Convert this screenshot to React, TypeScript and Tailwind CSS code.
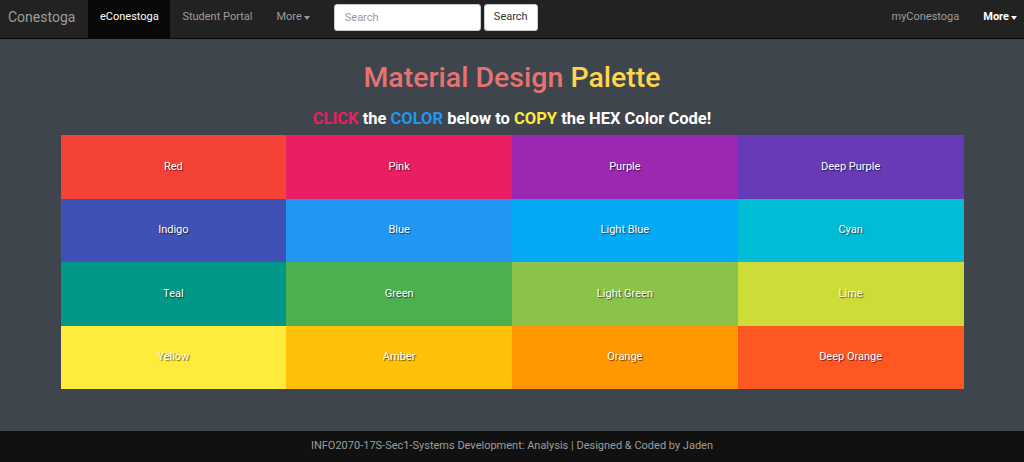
import React from 'react';

const colors: [string, string][] = [
  ['Red', '#f44336'],
  ['Pink', '#e91e63'],
  ['Purple', '#9c27b0'],
  ['Deep Purple', '#673ab7'],
  ['Indigo', '#3f51b5'],
  ['Blue', '#2196f3'],
  ['Light Blue', '#03a9f4'],
  ['Cyan', '#00bcd4'],
  ['Teal', '#009688'],
  ['Green', '#4caf50'],
  ['Light Green', '#8bc34a'],
  ['Lime', '#cddc39'],
  ['Yellow', '#ffeb3b'],
  ['Amber', '#ffc107'],
  ['Orange', '#ff9800'],
  ['Deep Orange', '#ff5722'],
];

const Caret = () => (
  <span className="ml-[2px] inline-block h-0 w-0 border-x-[3.5px] border-t-[4px] border-x-transparent border-t-current align-middle" />
);

const App = () => {
  return (
    <div className="flex min-h-[462px] flex-col bg-[#3e454c] font-['Roboto',sans-serif]">
      <nav className="flex h-[39px] items-stretch border-b border-[#080808] bg-[#222222] text-[11px]">
        <a className="flex items-center pb-[3px] pl-[8px] pr-[13px] text-[14px] text-[#9d9d9d]">Conestoga</a>
        <a className="flex w-[82px] items-center justify-center bg-[#080808] pb-[3px] text-white">eConestoga</a>
        <a className="flex items-center px-[12px] pb-[3px] text-[#9d9d9d]">Student Portal</a>
        <a className="flex items-center px-[12px] pb-[3px] text-[#9d9d9d]">
          More
          <Caret />
        </a>
        <div className="ml-[12px] flex items-center gap-[3px] pb-[4px]">
          <input
            className="h-[27px] w-[147px] rounded-[3px] border border-[#ccc] bg-white px-[10px] text-[11px] outline-none placeholder:text-[#999]"
            placeholder="Search"
          />
          <button className="h-[27px] w-[54px] rounded-[3px] border border-[#ccc] bg-white text-[11px] text-[#333]">
            Search
          </button>
        </div>
        <div className="ml-auto flex items-stretch">
          <a className="flex items-center px-[12px] pb-[3px] text-[#9d9d9d]">myConestoga</a>
          <a className="flex items-center pb-[3px] pl-[12px] pr-[7px] font-bold text-white">
            More
            <Caret />
          </a>
        </div>
      </nav>

      <main className="flex flex-1 flex-col items-center">
        <h1 className="mt-[19px] text-[28.5px] font-medium leading-[40px]">
          <span className="text-[#e57373]">Material Design </span>
          <span className="text-[#ffd54f]">Palette</span>
        </h1>
        <h2 className="mt-[9px] text-[16.5px] font-bold leading-[24px] text-white">
          <span className="text-[#e91e63]">CLICK</span> the <span className="text-[#2196f3]">COLOR</span> below to{' '}
          <span className="text-[#ffeb3b]">COPY</span> the HEX Color Code!
        </h2>
        <div className="mt-[4px] grid w-[903px] grid-cols-4">
          {colors.map(([name, hex]) => (
            <div
              key={name}
              className="flex h-[63.5px] items-center justify-center text-[11px] text-white [text-shadow:1px_1px_1px_rgba(0,0,0,0.6)]"
              style={{ backgroundColor: hex }}
            >
              {name}
            </div>
          ))}
        </div>
      </main>

      <footer className="flex h-[31px] items-center justify-center bg-[#111111] text-[11px] text-[#9d9d9d]">
        INFO2070-17S-Sec1-Systems Development: Analysis | Designed &amp; Coded by Jaden
      </footer>
    </div>
  );
};

export default App;
